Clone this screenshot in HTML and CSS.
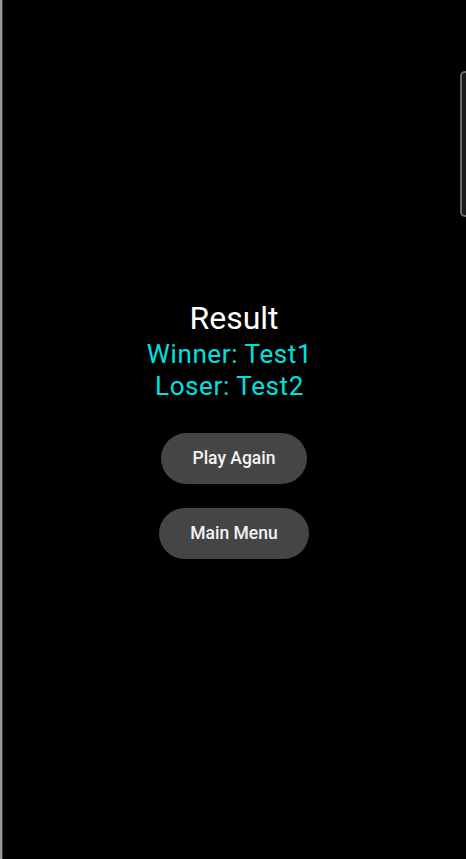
FILE: index.html
```html
<!DOCTYPE html>
<html>
<head>
<meta charset="utf-8">
<link rel="stylesheet" href="styles.css">
</head>
<body>
<div class="screen">
  <div class="content">
    <div class="title">Result</div>
    <div class="line">Winner: Test1</div>
    <div class="line">Loser: Test2</div>
    <div class="buttons">
      <button class="btn">Play Again</button>
      <button class="btn">Main Menu</button>
    </div>
  </div>
  <div class="edge-handle"></div>
</div>
</body>
</html>
```
FILE: styles.css
```css
html, body {
  margin: 0;
  padding: 0;
  background: #000;
  height: 100%;
}
.screen {
  position: relative;
  box-sizing: border-box;
  height: 859px;
  border-left: 2px solid #9a9a9a;
  box-shadow: inset 1px 0 0 #3a3a3a;
  background: #000;
  display: flex;
  justify-content: center;
  align-items: center;
  font-family: Roboto, "Noto Sans", sans-serif;
}
.content {
  display: flex;
  flex-direction: column;
  align-items: center;
}
.title {
  color: #ffffff;
  font-size: 32px;
  line-height: 35px;
  margin-bottom: 2px;
}
.line {
  color: #00e0e0;
  font-size: 26px;
  line-height: 32px;
  letter-spacing: 0.6px;
  padding-right: 9px;
}
.buttons {
  display: flex;
  flex-direction: column;
  align-items: center;
  gap: 24px;
  margin-top: 31px;
}
.btn {
  font-family: Roboto, "Noto Sans", sans-serif;
  font-size: 17.5px;
  font-weight: 500;
  color: #f2f2f2;
  background: #454545;
  border: none;
  border-radius: 26px;
  height: 51px;
  padding: 0 31px;
}
.edge-handle {
  position: absolute;
  right: -4px;
  top: 71px;
  width: 10px;
  height: 146px;
  border: 2px solid #6a6a6a;
  border-radius: 6px;
  background: #1a1a1a;
  box-sizing: border-box;
}
```
